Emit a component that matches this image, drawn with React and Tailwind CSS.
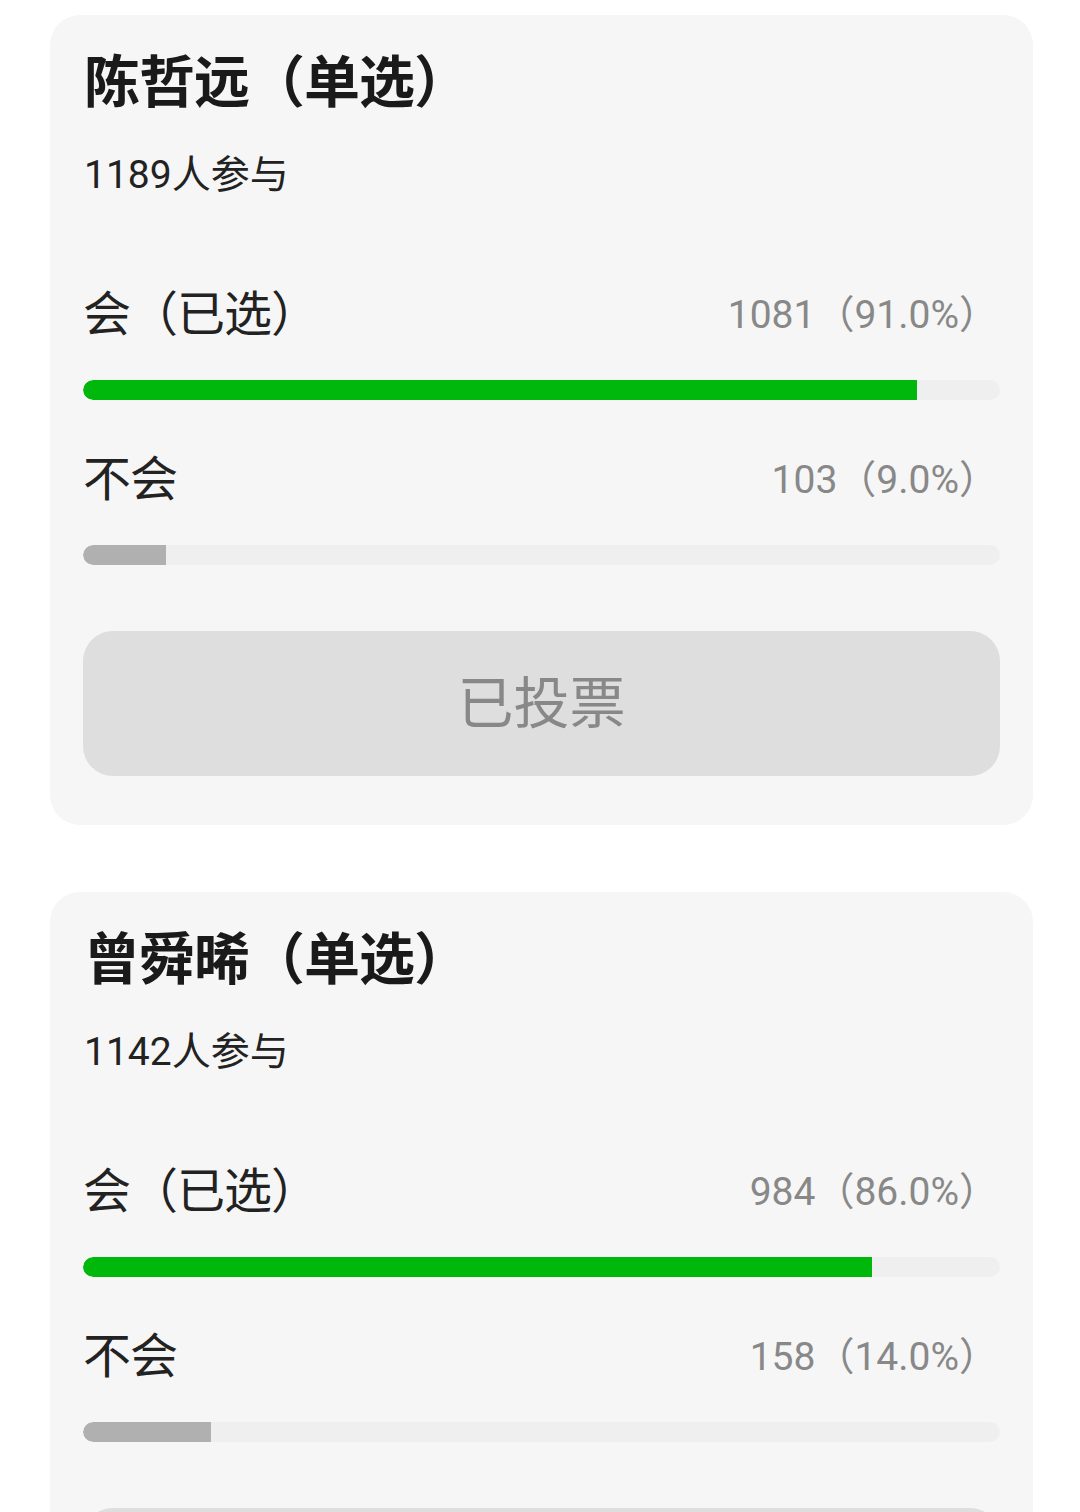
import React from 'react'

const polls = [
    {
        title: "陈哲远（单选）",
        total: "1189人参与",
        options: [
            { label: "会（已选）", count: "1081（91.0%）", pct: 91.0, picked: true },
            { label: "不会", count: "103（9.0%）", pct: 9.0, picked: false },
        ],
    },
    {
        title: "曾舜晞（单选）",
        total: "1142人参与",
        options: [
            { label: "会（已选）", count: "984（86.0%）", pct: 86.0, picked: true },
            { label: "不会", count: "158（14.0%）", pct: 14.0, picked: false },
        ],
    },
]

const PollCard = ({ poll }) => {
    return (
        <div className="bg-[#f6f6f6] rounded-[30px] ml-[50px] w-[983px] pt-[34px] pb-[49px] px-[33px]">
            <h2 className="text-[56px] leading-[68px] font-bold text-[#1a1a1a] pl-[1px] tracking-[-1px]">
                {poll.title}
            </h2>
            <p className="mt-[36px] text-[39px] leading-[44px] text-[#222] pl-[1px]">
                {poll.total}
            </p>
            <div className="mt-[90px] flex flex-col">
                {poll.options.map((opt, i) => (
                    <div key={i} className={i > 0 ? "mt-[52px]" : ""}>
                        <div className="flex items-center justify-between h-[56px] pr-[2px]">
                            <span className="text-[48px] text-[#222] tracking-[-1px]">{opt.label}</span>
                            <span className="text-[39px] text-[#888]">{opt.count}</span>
                        </div>
                        <div className="mt-[37px] h-[20px] bg-[#efefef] rounded-full overflow-hidden">
                            <div
                                className={`h-full rounded-l-full ${opt.picked ? "bg-[#00b80c]" : "bg-[#b0b0b0]"}`}
                                style={{ width: `${opt.pct}%` }}
                            />
                        </div>
                    </div>
                ))}
            </div>
            <button className="mt-[66px] w-full h-[145px] rounded-[30px] bg-[#dedede] text-[56px] text-[#888] flex items-center justify-center">
                已投票
            </button>
        </div>
    )
}

const App = () => {
    return (
        <div
            className="w-[1080px] h-[1512px] overflow-hidden bg-white pt-[15px] flex flex-col gap-[67px]"
            style={{ fontFamily: 'Roboto, "Noto Sans CJK SC", sans-serif' }}
        >
            {polls.map((poll, i) => (
                <PollCard key={i} poll={poll} />
            ))}
        </div>
    )
}

export default App
